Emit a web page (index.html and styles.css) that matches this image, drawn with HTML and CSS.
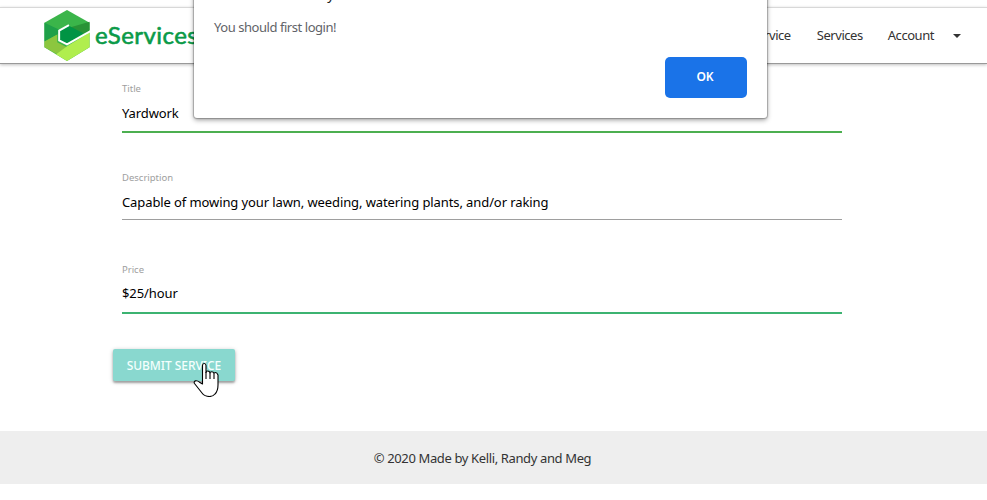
FILE: index.html
```html
<!DOCTYPE html>
<html lang="en">
<head>
<meta charset="utf-8">
<title>eServices</title>
<link rel="stylesheet" href="styles.css">
</head>
<body>
<header class="navbar">
  <a class="brand">
    <svg class="mark" width="46" height="51" viewBox="0 0 46 52">
      <path fill="#3bb54a" d="M23 0 46 13V38L23 52 0 38V13Z"/>
      <path fill="#1fa049" d="M0 13 17 21 13 25 0 32Z"/>
      <path fill="#299336" d="M46 12V22L39 24 25 18Z"/>
      <path fill="#8cc63f" d="M0 32 13 25V33L23 38 13 45 0 38Z"/>
      <path fill="#b0ee4e" d="M46 23V38L23 52 0 38 12 45 23 37Z"/>
      <path fill="#009444" d="M15 21 25 16 40 24 23 34 15 31Z"/>
      <path fill="none" stroke="#fff" stroke-width="2" d="M25 15.500 15 21V31L23 35 47 21.500"/>
    </svg>
    <span class="name">eServices</span>
  </a>
  <nav class="links">
    <a class="add">Add Service</a>
    <a class="services">Services</a>
    <a class="account">Account</a>
    <svg class="caret" width="8" height="4" viewBox="0 0 8 4"><path fill="#333" d="M0 0H8L4 4Z"/></svg>
  </nav>
</header>
<main class="form">
  <div class="field title">
    <label>Title</label>
    <div class="value">Yardwork</div>
  </div>
  <div class="field description">
    <label>Description</label>
    <div class="value">Capable of mowing your lawn, weeding, watering plants, and/or raking</div>
  </div>
  <div class="field price">
    <label>Price</label>
    <div class="value">$25/hour</div>
  </div>
  <button class="submit"><span>SUBMIT SERVICE</span></button>
</main>
<footer class="footer"><span>© 2020 Made by Kelli, Randy and Meg</span></footer>
<div class="dialog">
  <div class="origin">127.0.0.1:5000 says</div>
  <p class="message"><span>You should first login!</span></p>
  <button class="ok">OK</button>
</div>
<svg class="cursor" width="27" height="35" viewBox="0 0 27 35">
  <path fill="#fff" stroke="#000" stroke-width="1.1" stroke-linejoin="round" d="M9.5 22V3.5Q9.5 1.5 11.2 1.5T13 3.5V10.5Q13 9 14.8 9T17 11Q17 9.700 18.700 9.700T21 11.500Q21 10.500 22.500 10.500T25 13V23Q25 29 22 32 20 34.500 16.500 34.500 11.500 34.500 9 31L1.500 21.500Q.500 19.500 2.500 18.900 4.500 18.500 6.500 20.200Z"/>
  <path fill="none" stroke="#000" stroke-width="1.1" d="M13 10V17M17 11V17M21 12V17"/>
</svg>
</body>
</html>
```
FILE: styles.css
```css
* { box-sizing: border-box; }
body {
  margin: 0;
  height: 500px;
  padding-top: 7px;
  overflow: hidden;
  position: relative;
  background: #fff;
  font-family: "Noto Sans", "Open Sans", sans-serif;
  font-size: 13px;
  color: #212121;
}
.navbar {
  height: 57px;
  display: flex;
  justify-content: space-between;
  border-top: 1px solid #d8d8d8;
  border-bottom: 1px solid #999;
  box-shadow: 0 1px 3px rgba(0, 0, 0, .25);
  padding: 0 26px 0 44px;
}
.brand { display: flex; align-items: flex-start; padding-top: 2px; }
.name {
  margin-left: 5px;
  font: 400 24px/49px Lato, sans-serif;
  letter-spacing: .45px;
  color: #0a9a48;
  -webkit-text-stroke: .6px #0a9a48;
}
.links { display: flex; align-items: center; color: #333; white-space: nowrap; }
.links a { line-height: 55px; letter-spacing: -.45px; }
.services { margin-left: 26px; }
.account { margin-left: 25px; }
.caret { margin-left: 19px; }
.form { height: 367px; padding: 18px 0 0 113px; }
.field { width: 720px; margin-left: 9px; }
.field label {
  display: block;
  height: 14px;
  line-height: 14px;
  font-size: 9.5px;
  color: #9e9e9e;
}
.value {
  height: 37px;
  padding-top: 7px;
  line-height: 20px;
  color: #000;
  letter-spacing: -.1px;
  border-bottom: 2px solid #4caf50;
}
.description { margin-top: 38px; }
.description .value { height: 35px; border-bottom: 1px solid #9e9e9e; }
.price { margin-top: 43px; }
.price .value { padding-top: 6px; border-bottom-color: #3cb371; }
.submit {
  display: flex;
  align-items: center;
  justify-content: center;
  width: 122px;
  height: 32px;
  margin-top: 35px;
  padding: 1px 0 0;
  border: 0;
  border-radius: 2px;
  background: #89d8cf;
  color: #f4fffd;
  font: 500 12px/32px "Noto Sans", sans-serif;
  letter-spacing: -.05px;
  white-space: nowrap;
  box-shadow: 0 2px 2px rgba(0, 0, 0, .25), 0 1px 4px rgba(0, 0, 0, .25);
}
.footer {
  height: 53px;
  background: #eee;
  text-align: center;
  line-height: 54px;
  color: #333;
  letter-spacing: -.37px;
}
.footer span { position: relative; left: -11px; }
.dialog {
  position: absolute;
  left: 194px;
  top: -41px;
  width: 573px;
  height: 159px;
  padding: 25px 20px 20px;
  display: flex;
  flex-direction: column;
  background: #fff;
  border-radius: 0 0 3px 3px;
  box-shadow: 0 0 1px 1px rgba(0, 0, 0, .22), 0 2px 5px rgba(0, 0, 0, .4);
}
.origin { font-size: 14px; line-height: 20px; height: 20px; }
.message { margin: 13px 0 0; line-height: 20px; color: #5f6368; letter-spacing: -.45px; }
.ok {
  margin-top: auto;
  align-self: flex-end;
  width: 82px;
  height: 41px;
  padding: 0 2px 2px 0;
  border: 0;
  border-radius: 5px;
  background: #1a73e8;
  color: #fff;
  font: 600 12px "Noto Sans", sans-serif;
  letter-spacing: -.2px;
}
.cursor { position: absolute; left: 193px; top: 362px; }
```
